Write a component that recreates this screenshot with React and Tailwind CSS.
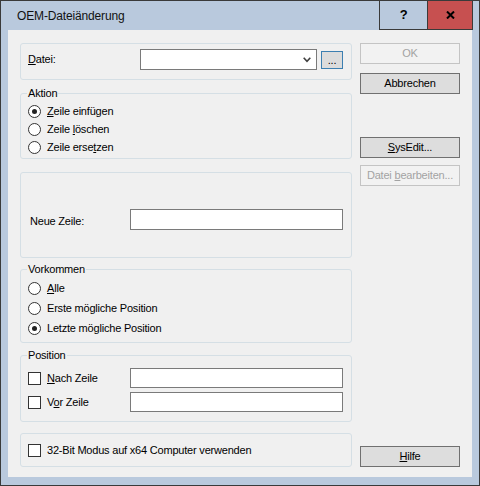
import { useState } from 'react'

function Radio({ checked, children }) {
  return (
    <div className="flex items-center h-[18px]">
      <span className="w-[13px] h-[13px] rounded-full border border-[#333333] bg-white flex items-center justify-center">
        {checked && <span className="w-[5px] h-[5px] rounded-full bg-[#222222]" />}
      </span>
      <span className="ml-[6px]">{children}</span>
    </div>
  )
}

function Check({ children }) {
  return (
    <div className="flex items-center">
      <span className="w-[13px] h-[13px] border border-[#333333] bg-white" />
      <span className="ml-[6px]">{children}</span>
    </div>
  )
}

function Legend({ children }) {
  return (
    <span className="absolute -top-[8px] left-[6px] px-[1px] bg-[#f0f0f0] leading-[14px]">
      {children}
    </span>
  )
}

function Btn({ disabled, children, className = '' }) {
  return (
    <div
      className={`w-[100px] h-[21px] flex items-center justify-center border ${
        disabled
          ? 'border-[#c4c4c4] bg-[#f2f2f2] text-[#a3a3a3]'
          : 'border-[#707070] bg-[#dddddd] text-black'
      } ${className}`}
    >
      {children}
    </div>
  )
}

export default function App() {
  const [aktion] = useState(0)
  const [vorkommen] = useState(2)

  return (
    <div className="w-[480px] h-[486px] bg-[#b9c9dd] border border-[#3a3a3a] flex flex-col font-['Liberation_Sans',Arial,sans-serif] text-[11px] tracking-[-0.2px] text-black">
      {/* Titelleiste */}
      <div className="h-[29px] flex items-stretch">
        <div className="flex-1 flex items-center pl-[16px] text-[12px] tracking-[-0.15px] text-[#111111]">OEM-Dateiänderung</div>
        <div className="w-[49px] border-l border-r border-b border-[#3a3a3a] flex items-center justify-center text-[13px] font-bold">
          ?
        </div>
        <div className="w-[45px] bg-[#c75050] border-r border-b border-[#3a3a3a] flex items-center justify-center">
          <svg width="9" height="8" viewBox="0 0 9 8">
            <path d="M1 0.5 L8 7.5 M8 0.5 L1 7.5" stroke="#000" strokeWidth="2" />
          </svg>
        </div>
        <div className="w-[6px]" />
      </div>

      {/* Dialoginhalt */}
      <div className="mx-[7px] h-[447px] bg-[#f0f0f0] flex pl-[12px] pt-[13px] pb-[10px]">
        <div className="w-[332px] flex flex-col">
          <div className="relative h-[37px] border border-[#d5dfe5] rounded-[3px] flex items-center pb-[4px]">
            <span className="w-[119px] pl-[7px]">
              <u>D</u>atei:
            </span>
            <div className="w-[177px] h-[21px] border border-[#7a7a7a] bg-white flex items-center justify-end pr-[5px]">
              <svg width="8" height="6" viewBox="0 0 8 6">
                <path d="M0.7 0.7 L4 4.3 L7.3 0.7" stroke="#404040" strokeWidth="1.6" fill="none" />
              </svg>
            </div>
            <div className="ml-[4px] w-[22px] h-[18px] border border-[#3c7fb1] bg-[#dcdcdc] flex items-end justify-center leading-[14px] pb-[1px]">
              ...
            </div>
          </div>

          <div className="relative mt-[13px] h-[66px] border border-[#d5dfe5] rounded-[3px] pl-[7px] pt-[8px]">
            <Legend>Aktion</Legend>
            <Radio checked={aktion === 0}>
              <u>Z</u>eile einfügen
            </Radio>
            <Radio checked={aktion === 1}>
              Zeile <u>l</u>öschen
            </Radio>
            <Radio checked={aktion === 2}>
              Zeile erse<u>t</u>zen
            </Radio>
          </div>

          <div className="relative mt-[13px] h-[86px] border border-[#d5dfe5] rounded-[3px] flex items-start pt-[36px]">
            <span className="w-[109px] pl-[9px] h-[21px] flex items-center pt-[3px]">Neue Zeile:</span>
            <div className="w-[213px] h-[21px] border border-[#7a7a7a] bg-white" />
          </div>

          <div className="relative mt-[11px] h-[74px] border border-[#d5dfe5] rounded-[3px] pl-[7px] pt-[9px]">
            <Legend>Vorkommen</Legend>
            <div className="flex flex-col gap-[2px]">
              <Radio checked={vorkommen === 0}>
                <u>A</u>lle
              </Radio>
              <Radio checked={vorkommen === 1}>Erste mögliche Position</Radio>
              <Radio checked={vorkommen === 2}>Letzte mögliche Position</Radio>
            </div>
          </div>

          <div className="relative mt-[12px] h-[67px] border border-[#d5dfe5] rounded-[3px] pt-[12px] flex flex-col gap-[4px]">
            <Legend>Position</Legend>
            <div className="flex items-center">
              <div className="w-[109px] pl-[7px]">
                <Check>
                  <u>N</u>ach Zeile
                </Check>
              </div>
              <div className="w-[213px] h-[20px] border border-[#7a7a7a] bg-white" />
            </div>
            <div className="flex items-center">
              <div className="w-[109px] pl-[7px]">
                <Check>
                  V<u>o</u>r Zeile
                </Check>
              </div>
              <div className="w-[213px] h-[20px] border border-[#7a7a7a] bg-white" />
            </div>
          </div>

          <div className="relative mt-[11px] h-[34px] border border-[#d5dfe5] rounded-[3px] flex items-center pl-[7px]">
            <Check>32-Bit Modus auf x64 Computer verwenden</Check>
          </div>
        </div>

        {/* Schaltflächen rechts */}
        <div className="ml-[8px] flex flex-col">
          <Btn disabled>OK</Btn>
          <Btn className="mt-[9px]">Abbrechen</Btn>
          <Btn className="mt-[43px]">
            <span>
              <u>S</u>ysEdit...
            </span>
          </Btn>
          <Btn disabled className="mt-[7px]">
            <span>
              Datei <u>b</u>earbeiten...
            </span>
          </Btn>
          <Btn className="mt-auto">
            <span>
              <u>H</u>ilfe
            </span>
          </Btn>
        </div>
      </div>
    </div>
  )
}
